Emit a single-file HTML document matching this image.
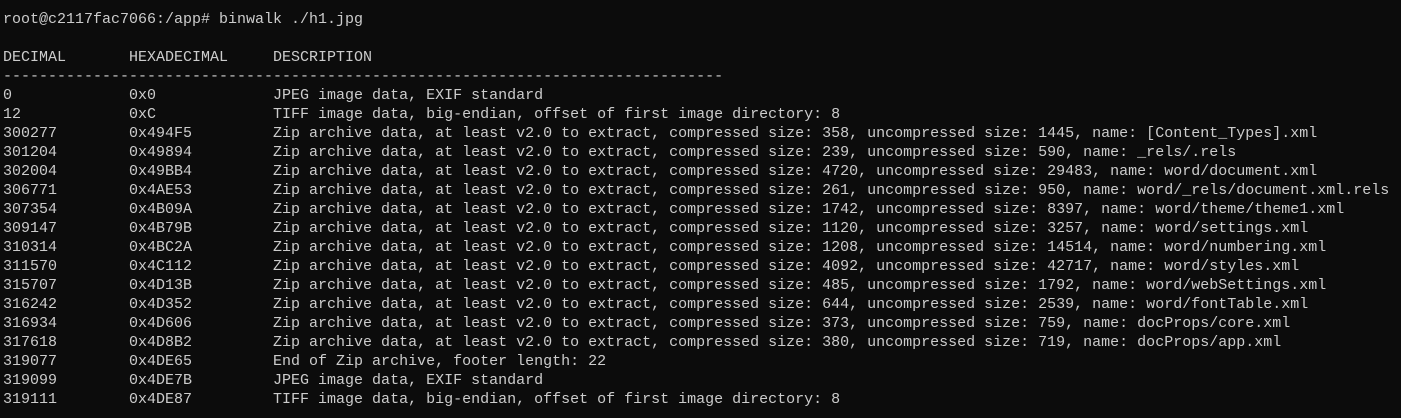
<!DOCTYPE html>
<html><head><meta charset="utf-8"><style>
html,body{margin:0;padding:0;background:#0c0c0c;width:1401px;height:418px;overflow:hidden}
pre{margin:0;position:absolute;left:3px;top:10px;font-family:"Liberation Mono",monospace;font-size:15px;line-height:19px;color:#cccccc;white-space:pre}
</style></head><body><pre>root@c2117fac7066:/app# binwalk ./h1.jpg

DECIMAL       HEXADECIMAL     DESCRIPTION
--------------------------------------------------------------------------------
0             0x0             JPEG image data, EXIF standard
12            0xC             TIFF image data, big-endian, offset of first image directory: 8
300277        0x494F5         Zip archive data, at least v2.0 to extract, compressed size: 358, uncompressed size: 1445, name: [Content_Types].xml
301204        0x49894         Zip archive data, at least v2.0 to extract, compressed size: 239, uncompressed size: 590, name: _rels/.rels
302004        0x49BB4         Zip archive data, at least v2.0 to extract, compressed size: 4720, uncompressed size: 29483, name: word/document.xml
306771        0x4AE53         Zip archive data, at least v2.0 to extract, compressed size: 261, uncompressed size: 950, name: word/_rels/document.xml.rels
307354        0x4B09A         Zip archive data, at least v2.0 to extract, compressed size: 1742, uncompressed size: 8397, name: word/theme/theme1.xml
309147        0x4B79B         Zip archive data, at least v2.0 to extract, compressed size: 1120, uncompressed size: 3257, name: word/settings.xml
310314        0x4BC2A         Zip archive data, at least v2.0 to extract, compressed size: 1208, uncompressed size: 14514, name: word/numbering.xml
311570        0x4C112         Zip archive data, at least v2.0 to extract, compressed size: 4092, uncompressed size: 42717, name: word/styles.xml
315707        0x4D13B         Zip archive data, at least v2.0 to extract, compressed size: 485, uncompressed size: 1792, name: word/webSettings.xml
316242        0x4D352         Zip archive data, at least v2.0 to extract, compressed size: 644, uncompressed size: 2539, name: word/fontTable.xml
316934        0x4D606         Zip archive data, at least v2.0 to extract, compressed size: 373, uncompressed size: 759, name: docProps/core.xml
317618        0x4D8B2         Zip archive data, at least v2.0 to extract, compressed size: 380, uncompressed size: 719, name: docProps/app.xml
319077        0x4DE65         End of Zip archive, footer length: 22
319099        0x4DE7B         JPEG image data, EXIF standard
319111        0x4DE87         TIFF image data, big-endian, offset of first image directory: 8
</pre></body></html>
